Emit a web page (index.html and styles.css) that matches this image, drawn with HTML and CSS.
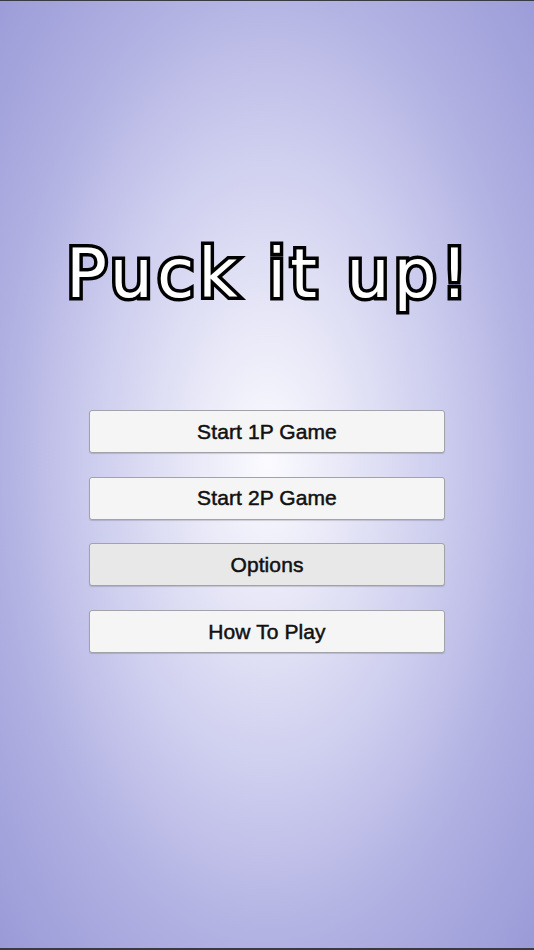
FILE: index.html
```html
<!DOCTYPE html>
<html lang="en">
<head>
    <meta charset="UTF-8">
    <meta name="viewport" content="width=device-width, initial-scale=1.0">
    <title>Puck it up!</title>
    <link rel="stylesheet" href="styles.css">
</head>
<body>
    <div class="screen">
        <h1 class="title">Puck it up!</h1>

        <div class="menu">
            <button class="menu-button">Start 1P Game</button>
            <button class="menu-button">Start 2P Game</button>
            <button class="menu-button selected">Options</button>
            <button class="menu-button">How To Play</button>
        </div>
    </div>
</body>
</html>
```

FILE: styles.css
```css
html, body {
    margin: 0;
    padding: 0;
}
body {
    background: #2e2e3a;
}
.screen {
    box-sizing: border-box;
    width: 534px;
    height: 950px;
    border-top: 1px solid #3a3a44;
    border-bottom: 2px solid #3a3a44;
    /* soft light spot in the middle fading to lavender corners */
    background: radial-gradient(ellipse farthest-corner at 50% 48.5%,
        #fbfbff 0%, #e6e6f7 22%, #cbcbee 48%, #b0b0e2 71%, #9a9ad8 100%);
    display: flex;
    flex-direction: column;
    align-items: center;
    padding-top: 239px;
}
.title {
    margin: 0;
    font-family: "DejaVu Sans", Verdana, sans-serif;
    font-weight: normal;
    font-size: 68px;
    line-height: 1;
    color: #fff;
    -webkit-text-stroke: 7px #000;
    paint-order: stroke fill;
    letter-spacing: 4px;
    margin-right: -4px;
}
.menu {
    margin-top: 102px;
    display: flex;
    flex-direction: column;
    gap: 23.7px;
}
.menu-button {
    width: 356px;
    height: 43px;
    background: #f5f5f5;
    border: 1px solid #a2a2a8;
    border-radius: 3px;
    box-shadow: 0 1px 1px rgba(0, 0, 0, 0.15);
    font-family: "Liberation Sans", Arial, sans-serif;
    font-size: 21px;
    letter-spacing: 0.1px;
    -webkit-text-stroke: 0.5px #111;
    color: #111;
    padding: 0;
    cursor: pointer;
}
.menu-button.selected {
    background: #e8e8e8;
}
```
